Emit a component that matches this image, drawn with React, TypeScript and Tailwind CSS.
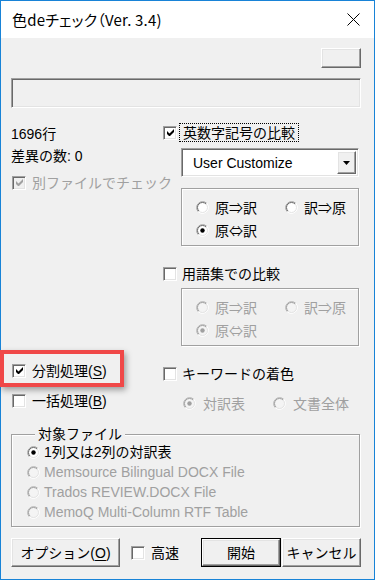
import React from "react";

const raised =
  "bg-[#f0f0f0] border border-t-white border-l-white border-b-[#696969] border-r-[#696969] shadow-[inset_-1px_-1px_0_#a0a0a0,inset_1px_1px_0_#e3e3e3]";
const sunken =
  "border border-t-[#a0a0a0] border-l-[#a0a0a0] border-b-white border-r-white shadow-[inset_1px_1px_0_#696969,inset_-1px_-1px_0_#e3e3e3]";
const etched = "border border-[#a0a0a0] shadow-[inset_1px_1px_0_#fff,1px_1px_0_#fff]";

type BoxProps = { on?: boolean; dis?: boolean };

const Check = ({ on, dis }: BoxProps) => (
  <span
    className={`flex w-[14px] h-[14px] shrink-0 items-center justify-center ${sunken} ${
      dis ? "bg-[#f0f0f0]" : "bg-white"
    }`}>
    {on && (
      <svg width="7" height="7" viewBox="0 0 7 7">
        <polygon points="0,2 2.5,4.5 7,0 7,3 3,7 2,7 0,5" fill={dis ? "#a0a0a0" : "#000"} />
      </svg>
    )}
  </span>
);

const Radio = ({ on, dis }: BoxProps) => (
  <svg width="13" height="13" viewBox="0 0 13 13" className="shrink-0">
    <circle cx="6.5" cy="6.5" r="6" fill={dis ? "#f4f4f4" : "#fff"} />
    <path d="M2.26 10.74A6 6 0 0 1 10.74 2.26" stroke={dis ? "#b4b4b4" : "#a0a0a0"} fill="none" />
    <path d="M2.96 10.04A5 5 0 0 1 10.04 2.96" stroke={dis ? "#a0a0a0" : "#696969"} fill="none" />
    <path d="M10.74 2.26A6 6 0 0 1 2.26 10.74" stroke="#fff" fill="none" />
    <path d="M10.04 2.96A5 5 0 0 1 2.96 10.04" stroke="#e3e3e3" fill="none" />
    {on && <circle cx="6.5" cy="6.5" r="2.2" fill={dis ? "#a0a0a0" : "#000"} />}
  </svg>
);

const Opt = ({
  on,
  dis,
  gap = "gap-[6px]",
  className = "",
  children,
}: BoxProps & { gap?: string; className?: string; children: React.ReactNode }) => (
  <div className={`flex items-center ${gap} ${className}`}>
    <Radio on={on} dis={dis} />
    <span className={`whitespace-nowrap ${dis ? "text-[#a0a0a0]" : "text-black"}`}>{children}</span>
  </div>
);

const GroupBox = ({ dis, mt }: { dis?: boolean; mt: string }) => (
  <div
    className={`ml-[18px] mr-[2px] ${mt} pl-[14px] pt-[8px] pb-[5px] flex flex-col gap-[3px] font-['Noto_Sans_CJK_JP',sans-serif] ${etched}`}>
    <div className="flex h-[20px]">
      <Opt dis={dis} className="w-[89px]">原⇒訳</Opt>
      <Opt dis={dis}>訳⇒原</Opt>
    </div>
    <div className="flex h-[20px]">
      <Opt on dis={dis}>原⇔訳</Opt>
    </div>
  </div>
);

export default function App() {
  return (
    <div className="relative w-[375px] h-[580px] border border-[#1883d7] flex flex-col font-['Liberation_Sans','Noto_Sans_CJK_JP',sans-serif] text-[14px] leading-[16px] text-black">
      {/* title bar */}
      <div className="h-[37px] shrink-0 bg-white flex items-center justify-between pl-[11px] pr-[14px]">
        <span className="text-[15px] font-['Noto_Sans_CJK_JP',sans-serif] [font-feature-settings:'palt'] tracking-[0.2px]">
          色deチェック（Ver. 3.4)
        </span>
        <svg width="13" height="13" viewBox="0 0 13 13" className="mb-[1px]">
          <path d="M0.5 0.5L12.5 12.5M12.5 0.5L0.5 12.5" stroke="#000" strokeWidth="1" />
        </svg>
      </div>

      {/* body */}
      <div className="flex-1 bg-[#f0f0f0] pl-[10px] pr-[13px] pt-[10px] flex flex-col">
        <div className="flex justify-end">
          <div className={`w-[40px] h-[20px] ${raised}`} />
        </div>
        <div className={`mt-[10px] h-[30px] bg-[#f0f0f0] ${sunken}`} />

        <div className="flex mt-[15px]">
          {/* left column */}
          <div className="w-[152px] shrink-0 flex flex-col">
            <div className="h-[22px] flex items-center">1696行</div>
            <div className="h-[21px] flex items-center">差異の数: 0</div>
            <div className="mt-[7px] h-[19px] flex items-center gap-[6px] pl-[1px] whitespace-nowrap">
              <Check on dis />
              <span className="text-[#a0a0a0]">別ファイルでチェック</span>
            </div>
            <div className="mt-[169px] h-[19px] flex items-center gap-[6px] pl-[1px]">
              <Check on />
              <span>
                分割処理(<span className="underline underline-offset-2">S</span>)
              </span>
            </div>
            <div className="mt-[11px] h-[19px] flex items-center gap-[6px] pl-[1px]">
              <Check />
              <span>
                一括処理(<span className="underline underline-offset-2">B</span>)
              </span>
            </div>
          </div>

          {/* right column */}
          <div className="flex-1 flex flex-col">
            <div className="h-[19px] flex items-center gap-[2px]">
              <Check on />
              <span className="h-[19px] flex items-center px-[3px] border border-dotted border-black">
                英数字記号の比較
              </span>
            </div>
            <div
              className={`ml-[18px] mr-[2px] mt-[6px] h-[29px] bg-white flex items-center justify-between pl-[11px] pr-[2px] ${sunken}`}>
              <span>User Customize</span>
              <div className={`w-[19px] h-[23px] flex items-center justify-center ${raised}`}>
                <svg width="7" height="4" viewBox="0 0 7 4">
                  <polygon points="0,0 7,0 3.5,4" fill="#000" />
                </svg>
              </div>
            </div>
            <GroupBox mt="mt-[11px]" />
            <div className="mt-[18px] h-[19px] flex items-center gap-[5px]">
              <Check />
              <span>用語集での比較</span>
            </div>
            <GroupBox dis mt="mt-[5px]" />
            <div className="mt-[18px] h-[19px] flex items-center gap-[5px]">
              <Check />
              <span>キーワードの着色</span>
            </div>
            <div className="mt-[11px] h-[19px] flex items-center pl-[20px]">
              <Opt on dis gap="gap-[7px]" className="w-[90px]">対訳表</Opt>
              <Opt dis gap="gap-[7px]">文書全体</Opt>
            </div>
          </div>
        </div>

        {/* target file group */}
        <fieldset className={`mt-[14px] mr-[1px] pl-[15px] pb-[4px] ${etched}`}>
          <legend className="ml-[8px] px-[3px] bg-[#f0f0f0] leading-[14px]">対象ファイル</legend>
          <div className="pt-[1px] flex flex-col">
            <div className="h-[20px] flex">
              <Opt on gap="gap-[4px]">1列又は2列の対訳表</Opt>
            </div>
            <div className="h-[20px] flex">
              <Opt dis gap="gap-[4px]">Memsource Bilingual DOCX File</Opt>
            </div>
            <div className="h-[20px] flex">
              <Opt dis gap="gap-[4px]">Trados REVIEW.DOCX File</Opt>
            </div>
            <div className="h-[20px] flex">
              <Opt dis gap="gap-[4px]">MemoQ Multi-Column RTF Table</Opt>
            </div>
          </div>
        </fieldset>

        {/* bottom buttons */}
        <div className="mt-[11px] h-[29px] flex items-center">
          <div className={`w-[109px] h-[29px] flex items-center justify-center ${raised}`}>
            オプション(<span className="underline underline-offset-2">O</span>)
          </div>
          <div className="ml-[11px] flex items-center gap-[6px]">
            <Check />
            <span>高速</span>
          </div>
          <div className="ml-auto w-[80px] h-[29px] border border-black flex">
            <div className={`flex-1 flex items-center justify-center ${raised}`}>開始</div>
          </div>
          <div className={`ml-[1px] w-[79px] h-[29px] flex items-center justify-center ${raised}`}>
            キャンセル
          </div>
        </div>
      </div>

      {/* highlight annotation */}
      <div className="absolute left-[-1px] top-[349px] w-[124px] h-[37px] border-4 border-[#f04848] shadow-[2px_3px_6px_rgba(0,0,0,0.35)]" />
    </div>
  );
}
